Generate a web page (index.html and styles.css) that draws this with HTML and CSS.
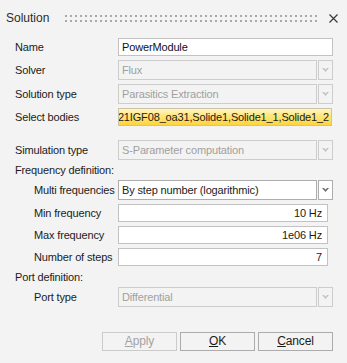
FILE: index.html
```html
<!DOCTYPE html>
<html lang="en">
<head>
  <meta charset="UTF-8" />
  <title>Solution</title>
  <link rel="stylesheet" href="styles.css">
</head>
<body>

  <div class="titlebar">
    <span class="title">Solution</span>
    <svg class="grip" height="7">
      <defs>
        <pattern id="dots" width="5" height="5" patternUnits="userSpaceOnUse">
          <rect width="2" height="2" fill="#a9a9a9" />
        </pattern>
      </defs>
      <rect width="100%" height="100%" fill="url(#dots)" />
    </svg>
    <svg class="close" width="9" height="9" viewBox="0 0 9 9">
      <path d="M0.5 0.5 L8.5 8.5 M8.5 0.5 L0.5 8.5" stroke="#3a3a3a" stroke-width="1.2" />
    </svg>
  </div>

  <div class="form">
    <div class="row h22">
      <span class="label">Name</span>
      <div class="box text">PowerModule</div>
    </div>
    <div class="row h24">
      <span class="label">Solver</span>
      <div class="combo disabled">
        <div class="combo-main">Flux</div>
        <div class="combo-btn"><svg width="7" height="4"><polygon points="0,0 2,0 3.5,1.5 5,0 7,0 3.5,4" /></svg></div>
      </div>
    </div>
    <div class="row h24">
      <span class="label">Solution type</span>
      <div class="combo disabled">
        <div class="combo-main">Parasitics Extraction</div>
        <div class="combo-btn"><svg width="7" height="4"><polygon points="0,0 2,0 3.5,1.5 5,0 7,0 3.5,4" /></svg></div>
      </div>
    </div>
    <div class="row h22">
      <span class="label">Select bodies</span>
      <div class="box bodies"><span>21IGF08_oa31,Solide1,Solide1_1,Solide1_2</span></div>
    </div>

    <div class="row h24 gap-top">
      <span class="label">Simulation type</span>
      <div class="combo disabled">
        <div class="combo-main">S-Parameter computation</div>
        <div class="combo-btn"><svg width="7" height="4"><polygon points="0,0 2,0 3.5,1.5 5,0 7,0 3.5,4" /></svg></div>
      </div>
    </div>
    <div class="row h16">
      <span class="label">Frequency definition:</span>
    </div>
    <div class="row sub h24">
      <span class="label">Multi frequencies</span>
      <div class="combo">
        <div class="combo-main">By step number (logarithmic)</div>
        <div class="combo-btn"><svg width="7" height="4"><polygon points="0,0 2,0 3.5,1.5 5,0 7,0 3.5,4" /></svg></div>
      </div>
    </div>
    <div class="row sub h22">
      <span class="label">Min frequency</span>
      <div class="box num">10 Hz</div>
    </div>
    <div class="row sub h22">
      <span class="label">Max frequency</span>
      <div class="box num">1e06 Hz</div>
    </div>
    <div class="row sub h22">
      <span class="label">Number of steps</span>
      <div class="box num">7</div>
    </div>
    <div class="row h18">
      <span class="label">Port definition:</span>
    </div>
    <div class="row sub h22">
      <span class="label">Port type</span>
      <div class="combo disabled">
        <div class="combo-main">Differential</div>
        <div class="combo-btn"><svg width="7" height="4"><polygon points="0,0 2,0 3.5,1.5 5,0 7,0 3.5,4" /></svg></div>
      </div>
    </div>
  </div>

  <div class="buttons">
    <div class="btn disabled"><u>A</u>pply</div>
    <div class="btn"><u>O</u>K</div>
    <div class="btn"><u>C</u>ancel</div>
  </div>

</body>
</html>
```

FILE: styles.css
```css
body {
  margin: 0;
  width: 347px;
  height: 363px;
  background: #f3f3f3;
  color: #1b1b1b;
  font-family: 'Liberation Sans', Arial, sans-serif;
  font-size: 11px;
  letter-spacing: -0.15px;
  overflow: hidden;
}
.titlebar {
  height: 36px;
  display: flex;
  align-items: center;
  padding: 0 9px 0 6px;
}
.title {
  font-size: 12px;
  letter-spacing: 0;
  color: #2b2b2b;
}
.grip {
  flex: 1;
  margin: 0 9px 0 16px;
}
.close {
  display: block;
}
.row {
  display: flex;
  align-items: center;
  padding-left: 15px;
}
.row.sub {
  padding-left: 34px;
}
.h16 { height: 16px; }
.h18 { height: 18px; }
.h22 { height: 22px; }
.h24 { height: 24px; }
.gap-top {
  margin-top: 10px;
}
.label {
  width: 103px;
  white-space: nowrap;
}
.sub .label {
  width: 84px;
}
.box {
  box-sizing: border-box;
  height: 18px;
  line-height: 16px;
  padding: 0 3px;
  border: 1px solid #c2c2c2;
  background: #fff;
  white-space: nowrap;
  overflow: hidden;
}
.box.text {
  width: 215px;
  color: #0f0f2a;
}
.box.bodies {
  width: 214px;
  display: flex;
  justify-content: flex-end;
  padding: 0 2px 0 0;
  border-color: #c9c3a8;
  background: linear-gradient(#fff6c4, #ffe57a 45%, #ffd43a);
}
.box.bodies span {
  flex-shrink: 0;
}
.box.num {
  width: 210px;
  text-align: right;
  padding-right: 5px;
}
.combo {
  display: flex;
  gap: 1px;
}
.combo-main,
.combo-btn {
  box-sizing: border-box;
  height: 20px;
  border: 1px solid #adadad;
  background: #fff;
}
.combo-main {
  width: 199px;
  line-height: 18px;
  padding: 0 3px;
  white-space: nowrap;
}
.combo-btn {
  width: 15px;
  display: flex;
  align-items: center;
  justify-content: center;
}
.combo-btn svg {
  display: block;
  fill: #6f6f6f;
}
.combo.disabled .combo-main,
.combo.disabled .combo-btn {
  border-color: #cdcdcd;
  background: #f3f3f3;
  color: #a0a0a0;
}
.combo.disabled .combo-btn svg {
  fill: #c4c4c4;
}
.buttons {
  display: flex;
  justify-content: flex-end;
  gap: 3px;
  margin-top: 24px;
  padding-right: 14px;
}
.btn {
  box-sizing: border-box;
  width: 75px;
  height: 19px;
  line-height: 17px;
  text-align: center;
  border: 1px solid #acacac;
  background: #f3f3f3;
  color: #1b1b1b;
  font-size: 12px;
}
.btn.disabled {
  border-color: #cbcbcb;
  color: #a3a3a3;
}
```
